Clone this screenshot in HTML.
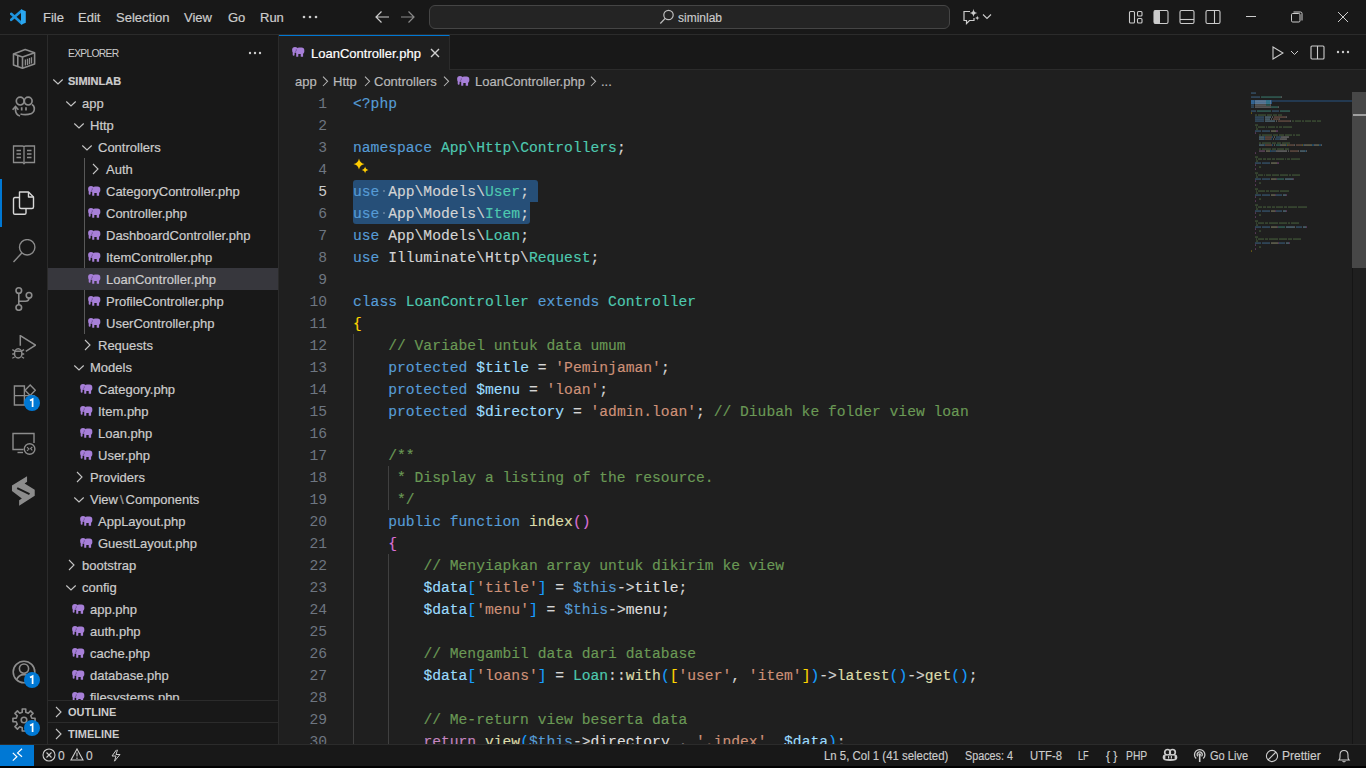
<!DOCTYPE html>
<html><head><meta charset="utf-8">
<style>
*{box-sizing:border-box;margin:0;padding:0}
html,body{width:1366px;height:768px;overflow:hidden;background:#181818;font-family:"Liberation Sans",sans-serif;color:#cccccc}
.abs{position:absolute}
svg{display:block}
#title{position:absolute;left:0;top:0;width:1366px;height:35px;background:#181818;border-bottom:1px solid #2b2b2b}
.menu{position:absolute;top:10px;font-size:13px;color:#cccccc;line-height:16px;-webkit-text-stroke:0.2px #cccccc}
#cc{position:absolute;left:429px;top:5px;width:521px;height:24px;background:#242424;border:1px solid #454545;border-radius:6px}
#act{position:absolute;left:0;top:35px;width:48px;height:709px;background:#181818;border-right:1px solid #2b2b2b}
.ai{position:absolute;left:0;width:47px;height:48px}
.ai svg{position:absolute;left:12px;top:12px}
.badge{position:absolute;width:16px;height:16px;border-radius:8px;background:#0078d4;color:#fff;font-size:10px;font-weight:bold;text-align:center;line-height:16px}
#side{position:absolute;left:48px;top:35px;width:231px;height:709px;background:#181818;border-right:1px solid #2b2b2b;overflow:hidden}
.row{position:absolute;left:0;width:230px;height:22px}
.row.sel{background:#37373d}
.ico{position:absolute}
.ico svg{display:block}
.tl{position:absolute;top:1px;line-height:22px;font-size:13px;color:#cccccc;white-space:nowrap;-webkit-text-stroke:0.2px #cccccc}
.tl.root{font-weight:bold;font-size:11px;top:0}
#tree{position:absolute;left:0;top:35px;width:230px;height:630px;overflow:hidden}
.sech{position:absolute;left:0;width:230px;height:22px;border-top:1px solid #2b2b2b}
.sech .t{position:absolute;left:20px;top:1px;line-height:21px;font-size:11px;font-weight:bold;color:#cccccc}
#editor{position:absolute;left:279px;top:35px;width:1087px;height:709px;background:#1f1f1f}
#tabs{position:absolute;left:0;top:0;width:1087px;height:35px;background:#181818;border-bottom:1px solid #2b2b2b}
#tab{position:absolute;left:0;top:0;width:171px;height:35px;background:#1f1f1f;border-top:1px solid #0078d4;border-right:1px solid #2b2b2b}
#crumbs{position:absolute;left:0;top:36px;width:1087px;height:22px;font-size:13px;color:#b9b9b9;line-height:22px;-webkit-text-stroke:0.2px #b9b9b9}
#code{position:absolute;left:0;top:57px;width:971px;height:652px;overflow:hidden}
.cl{position:absolute;left:74px;height:22px;line-height:22px;font-family:"Liberation Mono",monospace;font-size:14.66px;white-space:pre;color:#d4d4d4;-webkit-text-stroke:0.15px currentColor}
.cl span{-webkit-text-stroke:0.15px currentColor}
.ln{position:absolute;left:0;width:48px;text-align:right;height:22px;line-height:22px;font-family:"Liberation Mono",monospace;font-size:14.66px;color:#6e7681}
.ln.act{color:#cccccc}
.mm{position:absolute;left:972px;top:57px}
#status{position:absolute;left:0;top:744px;width:1366px;height:22px;background:#181818;border-top:1px solid #2b2b2b;font-size:12px;color:#cccccc}
#status .s{position:absolute;top:1px;line-height:21px;white-space:nowrap;transform-origin:0 50%;-webkit-text-stroke:0.15px #cccccc}
#bottomstrip{position:absolute;left:0;top:766px;width:1366px;height:2px;background:#010101}
</style></head><body>

<div id="title">
  <svg class="abs" style="left:10px;top:9px" width="16" height="16" viewBox="0 0 16 16"><path d="M1.2 4.8 L11.6 14.2 M1.2 10.8 L11.6 1.8" stroke="#1e94de" stroke-width="2.6" stroke-linecap="round"/><path d="M11 0.3 L15.8 2.3 L15.8 13.7 L11 15.7 Z" fill="#2aa6ef"/></svg>
  <div class="menu" style="left:43px">File</div>
  <div class="menu" style="left:78px">Edit</div>
  <div class="menu" style="left:116px">Selection</div>
  <div class="menu" style="left:184px">View</div>
  <div class="menu" style="left:228px">Go</div>
  <div class="menu" style="left:260px">Run</div>
  <svg class="abs" style="left:302px;top:15px" width="16" height="4" viewBox="0 0 16 4"><circle cx="2" cy="2" r="1.3" fill="#ccc"/><circle cx="8" cy="2" r="1.3" fill="#ccc"/><circle cx="14" cy="2" r="1.3" fill="#ccc"/></svg>
  <svg class="abs" style="left:374px;top:10px" width="16" height="14" viewBox="0 0 16 14"><path d="M15 7 H2 M7.5 1.5 L2 7 L7.5 12.5" fill="none" stroke="#cccccc" stroke-width="1.2"/></svg>
  <svg class="abs" style="left:400px;top:10px" width="16" height="14" viewBox="0 0 16 14"><path d="M1 7 H14 M8.5 1.5 L14 7 L8.5 12.5" fill="none" stroke="#8a8a8a" stroke-width="1.2"/></svg>
  <div id="cc"></div>
  <svg class="abs" style="left:659px;top:9px" width="16" height="16" viewBox="0 0 16 16"><circle cx="9.5" cy="6" r="4.7" fill="none" stroke="#bdbdbd" stroke-width="1.2"/><path d="M6.2 9.4 L1.3 14.5" stroke="#bdbdbd" stroke-width="1.3"/></svg>
  <div class="abs" style="left:678px;top:10px;font-size:12px;line-height:16px;color:#cccccc;-webkit-text-stroke:0.15px #cccccc">siminlab</div>
  <svg class="abs" style="left:963px;top:8px" width="18" height="17" viewBox="0 0 18 17"><path d="M7 3.5 H1 V12.5 H3.5 V15.5 L6.5 12.5 H11 V10" fill="none" stroke="#cccccc" stroke-width="1.2"/><path d="M10.5 0.8 C10.9 3.5 11.6 4.4 14.4 4.9 C11.6 5.4 10.9 6.3 10.5 9 C10.1 6.3 9.4 5.4 6.6 4.9 C9.4 4.4 10.1 3.5 10.5 0.8 Z" fill="#cccccc"/><path d="M14.3 7.6 C14.5 9.3 15 9.8 16.8 10.1 C15 10.4 14.5 10.9 14.3 12.6 C14.1 10.9 13.6 10.4 11.8 10.1 C13.6 9.8 14.1 9.3 14.3 7.6 Z" fill="#cccccc"/></svg>
  <svg class="abs" style="left:982px;top:13px" width="10" height="7" viewBox="0 0 10 7"><path d="M1 1.5 L5 5.5 L9 1.5" fill="none" stroke="#cccccc" stroke-width="1.1"/></svg>
  <!-- layout icons -->
  <svg class="abs" style="left:1128px;top:10px" width="16" height="14" viewBox="0 0 16 14"><rect x="1.5" y="1.5" width="5" height="11.5" rx="1" fill="none" stroke="#cccccc" stroke-width="1.1"/><rect x="9.5" y="1.5" width="4.5" height="4.5" rx="1" fill="none" stroke="#cccccc" stroke-width="1.1"/><rect x="9.5" y="8.5" width="4.5" height="4.5" rx="1" fill="none" stroke="#cccccc" stroke-width="1.1"/></svg>
  <svg class="abs" style="left:1153px;top:9px" width="16" height="16" viewBox="0 0 16 16"><rect x="1" y="1.5" width="14" height="13" rx="1.5" fill="none" stroke="#cccccc" stroke-width="1.1"/><rect x="1" y="1.5" width="6" height="13" rx="1" fill="#cccccc"/></svg>
  <svg class="abs" style="left:1179px;top:9px" width="16" height="16" viewBox="0 0 16 16"><rect x="1" y="1.5" width="14" height="13" rx="1.5" fill="none" stroke="#cccccc" stroke-width="1.1"/><path d="M1 10.5 H15" stroke="#cccccc" stroke-width="1.1"/></svg>
  <svg class="abs" style="left:1205px;top:9px" width="16" height="16" viewBox="0 0 16 16"><rect x="1" y="1.5" width="14" height="13" rx="1.5" fill="none" stroke="#cccccc" stroke-width="1.1"/><path d="M9.5 1.5 V14.5" stroke="#cccccc" stroke-width="1.1"/></svg>
  <!-- window controls -->
  <div class="abs" style="left:1246px;top:16px;width:10px;height:1px;background:#cccccc"></div>
  <svg class="abs" style="left:1291px;top:11px" width="12" height="12" viewBox="0 0 12 12"><rect x="0.5" y="2.5" width="8.5" height="8.5" rx="1.2" fill="none" stroke="#cccccc" stroke-width="1"/><path d="M2.5 1 H9.5 Q11 1 11 2.5 V9.5" fill="none" stroke="#cccccc" stroke-width="1"/></svg>
  <svg class="abs" style="left:1337px;top:11px" width="12" height="12" viewBox="0 0 12 12"><path d="M1 1 L11 11 M11 1 L1 11" stroke="#cccccc" stroke-width="1"/></svg>
</div>

<div id="act">
<div class="abs" style="left:0;top:0px;width:47px;height:48px"><svg class="abs" style="left:12px;top:12px" width="24" height="24" viewBox="0 0 24 24"><g fill="none" stroke="#8c8c8c" stroke-width="1.6" stroke-linejoin="round"><path d="M1.5 7 L13.2 2.5 L22.6 5.8 L22.6 17.1 L10.5 21.2 L1.5 18.1 Z"/><path d="M1.5 7 L10.5 10.1 L22.6 5.8"/><path d="M10.5 10.1 V21.2"/><path d="M5.8 9 V19.5"/><path d="M13.4 12.5 V18.6 M15.5 11.8 V17.9 M17.5 11 V17.2 M19.5 10.2 V16.5" stroke-width="1.3"/></g></svg></div>
<div class="abs" style="left:0;top:48px;width:47px;height:48px"><svg class="abs" style="left:12px;top:12px" width="24" height="24" viewBox="0 0 24 24"><g fill="none" stroke="#8c8c8c" stroke-width="1.7"><circle cx="8.2" cy="6.1" r="3.9"/><circle cx="16.2" cy="6.1" r="3.9"/><path d="M8.5 19 Q14 20.5 19.5 18.5 Q23 16.5 22.2 12.5 Q21.8 10.5 20 9.5"/><path d="M9.7 12.3 V15.6 M14 12.3 V15.6"/><path d="M3.5 12 V15 Q3.5 19.5 8 21"/><path d="M0.6 14.8 L3.5 11.5 L6.4 14.8"/></g></svg></div>
<div class="abs" style="left:0;top:96px;width:47px;height:48px"><svg class="abs" style="left:12px;top:12px" width="24" height="24" viewBox="0 0 24 24"><g fill="none" stroke="#8c8c8c" stroke-width="1.3"><path d="M1.5 3 H10.5 Q12 3 12 4.5 Q12 3 13.5 3 H22.5 V19.5 H13 L12 20.8 L11 19.5 H1.5 Z"/><path d="M12 4.5 V19.5"/><path d="M4.5 7.5 H9 M4.5 11 H9 M4.5 14.5 H9 M15 7.5 H19.5 M15 11 H19.5 M15 14.5 H19.5"/></g></svg></div>
<div class="abs" style="left:0;top:144px;width:47px;height:48px"><svg class="abs" style="left:12px;top:12px" width="24" height="24" viewBox="0 0 24 24"><g fill="none" stroke="#d7d7d7" stroke-width="1.4" stroke-linejoin="round"><path d="M7.5 1 H16.5 L21.5 6 V16 Q21.5 17.5 20 17.5 H9 Q7.5 17.5 7.5 16 Z"/><path d="M16.5 1 V6 H21.5"/><path d="M7.5 6.5 H3 Q1.5 6.5 1.5 8 V22 Q1.5 23.3 3 23.3 H12.5 Q14 23.3 14 22 V17.5"/></g></svg><div class="abs" style="left:0;top:0;width:2px;height:48px;background:#0078d4"></div></div>
<div class="abs" style="left:0;top:192px;width:47px;height:48px"><svg class="abs" style="left:12px;top:12px" width="24" height="24" viewBox="0 0 24 24"><g fill="none" stroke="#8c8c8c" stroke-width="1.4"><circle cx="15.2" cy="8.3" r="7.7"/><path d="M9.8 14 L1.5 23"/></g></svg></div>
<div class="abs" style="left:0;top:240px;width:47px;height:48px"><svg class="abs" style="left:12px;top:12px" width="24" height="24" viewBox="0 0 24 24"><g fill="none" stroke="#8c8c8c" stroke-width="1.6"><circle cx="6.8" cy="3.6" r="2.8"/><circle cx="17" cy="8.3" r="2.8"/><circle cx="6.8" cy="20.5" r="2.8"/><path d="M6.8 6.4 V17.7"/><path d="M17 11.1 Q17 14.2 13.5 14.2 H6.8"/></g></svg></div>
<div class="abs" style="left:0;top:288px;width:47px;height:48px"><svg class="abs" style="left:12px;top:12px" width="24" height="24" viewBox="0 0 24 24"><g fill="none" stroke="#8c8c8c" stroke-width="1.5"><path d="M8.3 10.7 V0.6 L23.5 10.1 L13.8 16.3"/><ellipse cx="6.2" cy="18.4" rx="3.7" ry="4.6"/><path d="M2.7 16.2 H9.7"/><path d="M0.3 14.6 L2.6 15.9 M12.1 14.6 L9.8 15.9 M0.2 19 H2.5 M9.9 19 H12.2 M0.3 23.3 L2.6 22 M12.1 23.3 L9.8 22" stroke-width="1.3"/></g></svg></div>
<div class="abs" style="left:0;top:336px;width:47px;height:48px"><svg class="abs" style="left:12px;top:12px" width="24" height="24" viewBox="0 0 24 24"><g fill="none" stroke="#8c8c8c" stroke-width="1.4"><path d="M2.4 3 H12.4 V22 H2.4 Z M2.4 12.6 H22 V22 H12.4"/><path d="M18.2 2 L23.3 7.2 L18.2 12.4 L13 7.2 Z"/></g></svg><div class="badge" style="left:24px;top:24px"><svg width="16" height="16" viewBox="0 0 16 16"><path d="M6 5.6 L8.6 4.2 V12" fill="none" stroke="#fff" stroke-width="1.7"/></svg></div></div>
<div class="abs" style="left:0;top:384px;width:47px;height:48px"><svg class="abs" style="left:12px;top:12px" width="24" height="24" viewBox="0 0 24 24"><g fill="none" stroke="#8c8c8c" stroke-width="1.4"><path d="M11.5 18.5 H1 V2.5 H22 V12"/><path d="M5.5 21.5 H11"/><circle cx="17.6" cy="18" r="5.3"/><path d="M15 16.2 L17 18 L15 19.8 M20.3 16 L18.6 17.6 L20.3 19.4" stroke-width="1.1"/></g></svg></div>
<div class="abs" style="left:0;top:432px;width:47px;height:48px"><svg class="abs" style="left:10px;top:7px" width="28" height="34" viewBox="0 0 28 34"><path fill="#8c8c8c" d="M17.06 2.2 L17.06 7.65 L14.58 9.4 L24.73 15.8 L24.73 21.8 L9.14 31.7 L9.14 26.2 L11.86 24.5 L1.96 17.06 L1.96 11.4 Z"/><path d="M7.2 14.1 L19.5 20.1" stroke="#181818" stroke-width="1.9"/></svg></div>
<div class="abs" style="left:0;top:613px;width:47px;height:48px"><svg class="abs" style="left:12px;top:12px" width="24" height="24" viewBox="0 0 24 24"><g fill="none" stroke="#8c8c8c" stroke-width="1.6"><circle cx="12" cy="12" r="10.8"/><circle cx="12" cy="8.6" r="4.6"/><path d="M4.6 19.8 Q6.5 14.6 12 14.6 Q17.5 14.6 19.4 19.8"/></g></svg><div class="badge" style="left:24px;top:24px"><svg width="16" height="16" viewBox="0 0 16 16"><path d="M6 5.6 L8.6 4.2 V12" fill="none" stroke="#fff" stroke-width="1.7"/></svg></div></div>
<div class="abs" style="left:0;top:661px;width:47px;height:48px"><svg class="abs" style="left:12px;top:12px" width="24" height="24" viewBox="0 0 24 24"><g fill="none" stroke="#8c8c8c" stroke-width="1.6" stroke-linejoin="round"><path d="M19.81 10.25 L23.06 10.22 L23.06 13.78 L19.81 13.75 L18.76 16.29 L21.08 18.56 L18.56 21.08 L16.29 18.76 L13.75 19.81 L13.78 23.06 L10.22 23.06 L10.25 19.81 L7.71 18.76 L5.44 21.08 L2.92 18.56 L5.24 16.29 L4.19 13.75 L0.94 13.78 L0.94 10.22 L4.19 10.25 L5.24 7.71 L2.92 5.44 L5.44 2.92 L7.71 5.24 L10.25 4.19 L10.22 0.94 L13.78 0.94 L13.75 4.19 L16.29 5.24 L18.56 2.92 L21.08 5.44 L18.76 7.71 Z"/><circle cx="12" cy="12" r="2.8"/></g></svg><div class="badge" style="left:24px;top:24px"><svg width="16" height="16" viewBox="0 0 16 16"><path d="M6 5.6 L8.6 4.2 V12" fill="none" stroke="#fff" stroke-width="1.7"/></svg></div></div>
</div>

<div id="side">
  <div class="abs" style="left:20px;top:1px;line-height:35px;font-size:10.3px;letter-spacing:-0.7px;color:#cccccc">EXPLORER</div>
  <svg class="abs" style="left:200px;top:16px" width="14" height="4" viewBox="0 0 14 4"><circle cx="2" cy="2" r="1.2" fill="#ccc"/><circle cx="7" cy="2" r="1.2" fill="#ccc"/><circle cx="12" cy="2" r="1.2" fill="#ccc"/></svg>
  <div id="tree">
    <div class="abs" style="left:36px;top:88px;width:1px;height:176px;background:#585858"></div>
<div class="row" style="top:0px"><div class="ico" style="left:4px;top:8px"><svg width="12" height="7" viewBox="0 0 12 7"><path d="M1.3 1.5 L6 6 L10.7 1.5" fill="none" stroke="#c5c5c5" stroke-width="1.15"/></svg></div><div class="tl root" style="left:20px">SIMINLAB</div></div>
<div class="row" style="top:22px"><div class="ico" style="left:17px;top:8px"><svg width="12" height="7" viewBox="0 0 12 7"><path d="M1.3 1.5 L6 6 L10.7 1.5" fill="none" stroke="#c5c5c5" stroke-width="1.15"/></svg></div><div class="tl" style="left:34px">app</div></div>
<div class="row" style="top:44px"><div class="ico" style="left:25px;top:8px"><svg width="12" height="7" viewBox="0 0 12 7"><path d="M1.3 1.5 L6 6 L10.7 1.5" fill="none" stroke="#c5c5c5" stroke-width="1.15"/></svg></div><div class="tl" style="left:42px">Http</div></div>
<div class="row" style="top:66px"><div class="ico" style="left:33px;top:8px"><svg width="12" height="7" viewBox="0 0 12 7"><path d="M1.3 1.5 L6 6 L10.7 1.5" fill="none" stroke="#c5c5c5" stroke-width="1.15"/></svg></div><div class="tl" style="left:50px">Controllers</div></div>
<div class="row" style="top:88px"><div class="ico" style="left:44px;top:5px"><svg width="7" height="12" viewBox="0 0 7 12"><path d="M1 1 L6 6 L1 11" fill="none" stroke="#c5c5c5" stroke-width="1.1"/></svg></div><div class="tl" style="left:58px">Auth</div></div>
<div class="row" style="top:110px"><div class="ico" style="left:40px;top:6px"><svg width="13" height="10" viewBox="0 0 13 10"><g fill="#a77fd8"><circle cx="3" cy="2.9" r="2.9"/><rect x="4.4" y="0.6" width="7.9" height="6.4" rx="2.8"/><rect x="4.2" y="4.5" width="2.1" height="5.2" rx="0.5"/><rect x="8.7" y="4.5" width="2.4" height="5.2" rx="0.5"/><rect x="0.7" y="3.5" width="1.9" height="5.2" rx="0.9"/></g><path d="M3 5.2 Q4.6 4.6 4.3 2.2" fill="none" stroke="#5a3f80" stroke-width="0.6"/></svg></div><div class="tl" style="left:58px">CategoryController.php</div></div>
<div class="row" style="top:132px"><div class="ico" style="left:40px;top:6px"><svg width="13" height="10" viewBox="0 0 13 10"><g fill="#a77fd8"><circle cx="3" cy="2.9" r="2.9"/><rect x="4.4" y="0.6" width="7.9" height="6.4" rx="2.8"/><rect x="4.2" y="4.5" width="2.1" height="5.2" rx="0.5"/><rect x="8.7" y="4.5" width="2.4" height="5.2" rx="0.5"/><rect x="0.7" y="3.5" width="1.9" height="5.2" rx="0.9"/></g><path d="M3 5.2 Q4.6 4.6 4.3 2.2" fill="none" stroke="#5a3f80" stroke-width="0.6"/></svg></div><div class="tl" style="left:58px">Controller.php</div></div>
<div class="row" style="top:154px"><div class="ico" style="left:40px;top:6px"><svg width="13" height="10" viewBox="0 0 13 10"><g fill="#a77fd8"><circle cx="3" cy="2.9" r="2.9"/><rect x="4.4" y="0.6" width="7.9" height="6.4" rx="2.8"/><rect x="4.2" y="4.5" width="2.1" height="5.2" rx="0.5"/><rect x="8.7" y="4.5" width="2.4" height="5.2" rx="0.5"/><rect x="0.7" y="3.5" width="1.9" height="5.2" rx="0.9"/></g><path d="M3 5.2 Q4.6 4.6 4.3 2.2" fill="none" stroke="#5a3f80" stroke-width="0.6"/></svg></div><div class="tl" style="left:58px">DashboardController.php</div></div>
<div class="row" style="top:176px"><div class="ico" style="left:40px;top:6px"><svg width="13" height="10" viewBox="0 0 13 10"><g fill="#a77fd8"><circle cx="3" cy="2.9" r="2.9"/><rect x="4.4" y="0.6" width="7.9" height="6.4" rx="2.8"/><rect x="4.2" y="4.5" width="2.1" height="5.2" rx="0.5"/><rect x="8.7" y="4.5" width="2.4" height="5.2" rx="0.5"/><rect x="0.7" y="3.5" width="1.9" height="5.2" rx="0.9"/></g><path d="M3 5.2 Q4.6 4.6 4.3 2.2" fill="none" stroke="#5a3f80" stroke-width="0.6"/></svg></div><div class="tl" style="left:58px">ItemController.php</div></div>
<div class="row sel" style="top:198px"><div class="ico" style="left:40px;top:6px"><svg width="13" height="10" viewBox="0 0 13 10"><g fill="#a77fd8"><circle cx="3" cy="2.9" r="2.9"/><rect x="4.4" y="0.6" width="7.9" height="6.4" rx="2.8"/><rect x="4.2" y="4.5" width="2.1" height="5.2" rx="0.5"/><rect x="8.7" y="4.5" width="2.4" height="5.2" rx="0.5"/><rect x="0.7" y="3.5" width="1.9" height="5.2" rx="0.9"/></g><path d="M3 5.2 Q4.6 4.6 4.3 2.2" fill="none" stroke="#5a3f80" stroke-width="0.6"/></svg></div><div class="tl" style="left:58px">LoanController.php</div></div>
<div class="row" style="top:220px"><div class="ico" style="left:40px;top:6px"><svg width="13" height="10" viewBox="0 0 13 10"><g fill="#a77fd8"><circle cx="3" cy="2.9" r="2.9"/><rect x="4.4" y="0.6" width="7.9" height="6.4" rx="2.8"/><rect x="4.2" y="4.5" width="2.1" height="5.2" rx="0.5"/><rect x="8.7" y="4.5" width="2.4" height="5.2" rx="0.5"/><rect x="0.7" y="3.5" width="1.9" height="5.2" rx="0.9"/></g><path d="M3 5.2 Q4.6 4.6 4.3 2.2" fill="none" stroke="#5a3f80" stroke-width="0.6"/></svg></div><div class="tl" style="left:58px">ProfileController.php</div></div>
<div class="row" style="top:242px"><div class="ico" style="left:40px;top:6px"><svg width="13" height="10" viewBox="0 0 13 10"><g fill="#a77fd8"><circle cx="3" cy="2.9" r="2.9"/><rect x="4.4" y="0.6" width="7.9" height="6.4" rx="2.8"/><rect x="4.2" y="4.5" width="2.1" height="5.2" rx="0.5"/><rect x="8.7" y="4.5" width="2.4" height="5.2" rx="0.5"/><rect x="0.7" y="3.5" width="1.9" height="5.2" rx="0.9"/></g><path d="M3 5.2 Q4.6 4.6 4.3 2.2" fill="none" stroke="#5a3f80" stroke-width="0.6"/></svg></div><div class="tl" style="left:58px">UserController.php</div></div>
<div class="row" style="top:264px"><div class="ico" style="left:36px;top:5px"><svg width="7" height="12" viewBox="0 0 7 12"><path d="M1 1 L6 6 L1 11" fill="none" stroke="#c5c5c5" stroke-width="1.1"/></svg></div><div class="tl" style="left:50px">Requests</div></div>
<div class="row" style="top:286px"><div class="ico" style="left:25px;top:8px"><svg width="12" height="7" viewBox="0 0 12 7"><path d="M1.3 1.5 L6 6 L10.7 1.5" fill="none" stroke="#c5c5c5" stroke-width="1.15"/></svg></div><div class="tl" style="left:42px">Models</div></div>
<div class="row" style="top:308px"><div class="ico" style="left:32px;top:6px"><svg width="13" height="10" viewBox="0 0 13 10"><g fill="#a77fd8"><circle cx="3" cy="2.9" r="2.9"/><rect x="4.4" y="0.6" width="7.9" height="6.4" rx="2.8"/><rect x="4.2" y="4.5" width="2.1" height="5.2" rx="0.5"/><rect x="8.7" y="4.5" width="2.4" height="5.2" rx="0.5"/><rect x="0.7" y="3.5" width="1.9" height="5.2" rx="0.9"/></g><path d="M3 5.2 Q4.6 4.6 4.3 2.2" fill="none" stroke="#5a3f80" stroke-width="0.6"/></svg></div><div class="tl" style="left:50px">Category.php</div></div>
<div class="row" style="top:330px"><div class="ico" style="left:32px;top:6px"><svg width="13" height="10" viewBox="0 0 13 10"><g fill="#a77fd8"><circle cx="3" cy="2.9" r="2.9"/><rect x="4.4" y="0.6" width="7.9" height="6.4" rx="2.8"/><rect x="4.2" y="4.5" width="2.1" height="5.2" rx="0.5"/><rect x="8.7" y="4.5" width="2.4" height="5.2" rx="0.5"/><rect x="0.7" y="3.5" width="1.9" height="5.2" rx="0.9"/></g><path d="M3 5.2 Q4.6 4.6 4.3 2.2" fill="none" stroke="#5a3f80" stroke-width="0.6"/></svg></div><div class="tl" style="left:50px">Item.php</div></div>
<div class="row" style="top:352px"><div class="ico" style="left:32px;top:6px"><svg width="13" height="10" viewBox="0 0 13 10"><g fill="#a77fd8"><circle cx="3" cy="2.9" r="2.9"/><rect x="4.4" y="0.6" width="7.9" height="6.4" rx="2.8"/><rect x="4.2" y="4.5" width="2.1" height="5.2" rx="0.5"/><rect x="8.7" y="4.5" width="2.4" height="5.2" rx="0.5"/><rect x="0.7" y="3.5" width="1.9" height="5.2" rx="0.9"/></g><path d="M3 5.2 Q4.6 4.6 4.3 2.2" fill="none" stroke="#5a3f80" stroke-width="0.6"/></svg></div><div class="tl" style="left:50px">Loan.php</div></div>
<div class="row" style="top:374px"><div class="ico" style="left:32px;top:6px"><svg width="13" height="10" viewBox="0 0 13 10"><g fill="#a77fd8"><circle cx="3" cy="2.9" r="2.9"/><rect x="4.4" y="0.6" width="7.9" height="6.4" rx="2.8"/><rect x="4.2" y="4.5" width="2.1" height="5.2" rx="0.5"/><rect x="8.7" y="4.5" width="2.4" height="5.2" rx="0.5"/><rect x="0.7" y="3.5" width="1.9" height="5.2" rx="0.9"/></g><path d="M3 5.2 Q4.6 4.6 4.3 2.2" fill="none" stroke="#5a3f80" stroke-width="0.6"/></svg></div><div class="tl" style="left:50px">User.php</div></div>
<div class="row" style="top:396px"><div class="ico" style="left:28px;top:5px"><svg width="7" height="12" viewBox="0 0 7 12"><path d="M1 1 L6 6 L1 11" fill="none" stroke="#c5c5c5" stroke-width="1.1"/></svg></div><div class="tl" style="left:42px">Providers</div></div>
<div class="row" style="top:418px"><div class="ico" style="left:25px;top:8px"><svg width="12" height="7" viewBox="0 0 12 7"><path d="M1.3 1.5 L6 6 L10.7 1.5" fill="none" stroke="#c5c5c5" stroke-width="1.15"/></svg></div><div class="tl" style="left:42px">View<span style="color:#8b8b8b;margin:0 2px">\</span>Components</div></div>
<div class="row" style="top:440px"><div class="ico" style="left:32px;top:6px"><svg width="13" height="10" viewBox="0 0 13 10"><g fill="#a77fd8"><circle cx="3" cy="2.9" r="2.9"/><rect x="4.4" y="0.6" width="7.9" height="6.4" rx="2.8"/><rect x="4.2" y="4.5" width="2.1" height="5.2" rx="0.5"/><rect x="8.7" y="4.5" width="2.4" height="5.2" rx="0.5"/><rect x="0.7" y="3.5" width="1.9" height="5.2" rx="0.9"/></g><path d="M3 5.2 Q4.6 4.6 4.3 2.2" fill="none" stroke="#5a3f80" stroke-width="0.6"/></svg></div><div class="tl" style="left:50px">AppLayout.php</div></div>
<div class="row" style="top:462px"><div class="ico" style="left:32px;top:6px"><svg width="13" height="10" viewBox="0 0 13 10"><g fill="#a77fd8"><circle cx="3" cy="2.9" r="2.9"/><rect x="4.4" y="0.6" width="7.9" height="6.4" rx="2.8"/><rect x="4.2" y="4.5" width="2.1" height="5.2" rx="0.5"/><rect x="8.7" y="4.5" width="2.4" height="5.2" rx="0.5"/><rect x="0.7" y="3.5" width="1.9" height="5.2" rx="0.9"/></g><path d="M3 5.2 Q4.6 4.6 4.3 2.2" fill="none" stroke="#5a3f80" stroke-width="0.6"/></svg></div><div class="tl" style="left:50px">GuestLayout.php</div></div>
<div class="row" style="top:484px"><div class="ico" style="left:20px;top:5px"><svg width="7" height="12" viewBox="0 0 7 12"><path d="M1 1 L6 6 L1 11" fill="none" stroke="#c5c5c5" stroke-width="1.1"/></svg></div><div class="tl" style="left:34px">bootstrap</div></div>
<div class="row" style="top:506px"><div class="ico" style="left:17px;top:8px"><svg width="12" height="7" viewBox="0 0 12 7"><path d="M1.3 1.5 L6 6 L10.7 1.5" fill="none" stroke="#c5c5c5" stroke-width="1.15"/></svg></div><div class="tl" style="left:34px">config</div></div>
<div class="row" style="top:528px"><div class="ico" style="left:24px;top:6px"><svg width="13" height="10" viewBox="0 0 13 10"><g fill="#a77fd8"><circle cx="3" cy="2.9" r="2.9"/><rect x="4.4" y="0.6" width="7.9" height="6.4" rx="2.8"/><rect x="4.2" y="4.5" width="2.1" height="5.2" rx="0.5"/><rect x="8.7" y="4.5" width="2.4" height="5.2" rx="0.5"/><rect x="0.7" y="3.5" width="1.9" height="5.2" rx="0.9"/></g><path d="M3 5.2 Q4.6 4.6 4.3 2.2" fill="none" stroke="#5a3f80" stroke-width="0.6"/></svg></div><div class="tl" style="left:42px">app.php</div></div>
<div class="row" style="top:550px"><div class="ico" style="left:24px;top:6px"><svg width="13" height="10" viewBox="0 0 13 10"><g fill="#a77fd8"><circle cx="3" cy="2.9" r="2.9"/><rect x="4.4" y="0.6" width="7.9" height="6.4" rx="2.8"/><rect x="4.2" y="4.5" width="2.1" height="5.2" rx="0.5"/><rect x="8.7" y="4.5" width="2.4" height="5.2" rx="0.5"/><rect x="0.7" y="3.5" width="1.9" height="5.2" rx="0.9"/></g><path d="M3 5.2 Q4.6 4.6 4.3 2.2" fill="none" stroke="#5a3f80" stroke-width="0.6"/></svg></div><div class="tl" style="left:42px">auth.php</div></div>
<div class="row" style="top:572px"><div class="ico" style="left:24px;top:6px"><svg width="13" height="10" viewBox="0 0 13 10"><g fill="#a77fd8"><circle cx="3" cy="2.9" r="2.9"/><rect x="4.4" y="0.6" width="7.9" height="6.4" rx="2.8"/><rect x="4.2" y="4.5" width="2.1" height="5.2" rx="0.5"/><rect x="8.7" y="4.5" width="2.4" height="5.2" rx="0.5"/><rect x="0.7" y="3.5" width="1.9" height="5.2" rx="0.9"/></g><path d="M3 5.2 Q4.6 4.6 4.3 2.2" fill="none" stroke="#5a3f80" stroke-width="0.6"/></svg></div><div class="tl" style="left:42px">cache.php</div></div>
<div class="row" style="top:594px"><div class="ico" style="left:24px;top:6px"><svg width="13" height="10" viewBox="0 0 13 10"><g fill="#a77fd8"><circle cx="3" cy="2.9" r="2.9"/><rect x="4.4" y="0.6" width="7.9" height="6.4" rx="2.8"/><rect x="4.2" y="4.5" width="2.1" height="5.2" rx="0.5"/><rect x="8.7" y="4.5" width="2.4" height="5.2" rx="0.5"/><rect x="0.7" y="3.5" width="1.9" height="5.2" rx="0.9"/></g><path d="M3 5.2 Q4.6 4.6 4.3 2.2" fill="none" stroke="#5a3f80" stroke-width="0.6"/></svg></div><div class="tl" style="left:42px">database.php</div></div>
<div class="row" style="top:616px"><div class="ico" style="left:24px;top:6px"><svg width="13" height="10" viewBox="0 0 13 10"><g fill="#a77fd8"><circle cx="3" cy="2.9" r="2.9"/><rect x="4.4" y="0.6" width="7.9" height="6.4" rx="2.8"/><rect x="4.2" y="4.5" width="2.1" height="5.2" rx="0.5"/><rect x="8.7" y="4.5" width="2.4" height="5.2" rx="0.5"/><rect x="0.7" y="3.5" width="1.9" height="5.2" rx="0.9"/></g><path d="M3 5.2 Q4.6 4.6 4.3 2.2" fill="none" stroke="#5a3f80" stroke-width="0.6"/></svg></div><div class="tl" style="left:42px">filesystems.php</div></div>
  </div>
  <div class="sech" style="top:665px"><svg class="abs" style="left:7px;top:5px" width="7" height="12" viewBox="0 0 7 12"><path d="M1 1 L6 6 L1 11" fill="none" stroke="#c5c5c5" stroke-width="1.1"/></svg><div class="t">OUTLINE</div></div>
  <div class="sech" style="top:687px"><svg class="abs" style="left:7px;top:5px" width="7" height="12" viewBox="0 0 7 12"><path d="M1 1 L6 6 L1 11" fill="none" stroke="#c5c5c5" stroke-width="1.1"/></svg><div class="t">TIMELINE</div></div>
</div>

<div id="editor">
  <div id="tabs">
    <div id="tab">
      <div class="abs" style="left:13px;top:11px"><svg width="13" height="10" viewBox="0 0 13 10"><g fill="#a77fd8"><circle cx="3" cy="2.9" r="2.9"/><rect x="4.4" y="0.6" width="7.9" height="6.4" rx="2.8"/><rect x="4.2" y="4.5" width="2.1" height="5.2" rx="0.5"/><rect x="8.7" y="4.5" width="2.4" height="5.2" rx="0.5"/><rect x="0.7" y="3.5" width="1.9" height="5.2" rx="0.9"/></g><path d="M3 5.2 Q4.6 4.6 4.3 2.2" fill="none" stroke="#5a3f80" stroke-width="0.6"/></svg></div>
      <div class="abs" style="left:32px;top:0;line-height:35px;font-size:13px;color:#ffffff;-webkit-text-stroke:0.2px #ffffff">LoanController.php</div>
      <svg class="abs" style="left:151px;top:12px" width="10" height="10" viewBox="0 0 10 10"><path d="M1 1 L9 9 M9 1 L1 9" stroke="#d0d0d0" stroke-width="1.4"/></svg>
    </div>
    <svg class="abs" style="left:993px;top:11px" width="12" height="14" viewBox="0 0 12 14"><path d="M1 1 L11 7 L1 13 Z" fill="none" stroke="#cccccc" stroke-width="1.1"/></svg>
    <svg class="abs" style="left:1011px;top:15px" width="9" height="6" viewBox="0 0 9 6"><path d="M1 1 L4.5 4.5 L8 1" fill="none" stroke="#cccccc" stroke-width="1"/></svg>
    <svg class="abs" style="left:1031px;top:10px" width="15" height="15" viewBox="0 0 15 15"><rect x="1" y="1" width="13" height="13" rx="1" fill="none" stroke="#cccccc" stroke-width="1.1"/><path d="M7.5 1 V14" stroke="#cccccc" stroke-width="1.1"/></svg>
    <svg class="abs" style="left:1057px;top:15px" width="14" height="4" viewBox="0 0 14 4"><circle cx="2" cy="2" r="1.2" fill="#ccc"/><circle cx="7" cy="2" r="1.2" fill="#ccc"/><circle cx="12" cy="2" r="1.2" fill="#ccc"/></svg>
  </div>
  <div id="crumbs"><div class="abs" style="left:16px;top:0">app</div>
<svg class="abs" style="left:43px;top:5px" width="7" height="11" viewBox="0 0 7 11"><path d="M1 0.6 L5.6 5.3 L1 10" fill="none" stroke="#b5b5b5" stroke-width="1.05"/></svg>
<div class="abs" style="left:54px;top:0">Http</div>
<svg class="abs" style="left:85px;top:5px" width="7" height="11" viewBox="0 0 7 11"><path d="M1 0.6 L5.6 5.3 L1 10" fill="none" stroke="#b5b5b5" stroke-width="1.05"/></svg>
<div class="abs" style="left:95px;top:0">Controllers</div>
<svg class="abs" style="left:164px;top:5px" width="7" height="11" viewBox="0 0 7 11"><path d="M1 0.6 L5.6 5.3 L1 10" fill="none" stroke="#b5b5b5" stroke-width="1.05"/></svg>
<div class="abs" style="left:177.5px;top:5px"><svg width="13" height="10" viewBox="0 0 13 10"><g fill="#a77fd8"><circle cx="3" cy="2.9" r="2.9"/><rect x="4.4" y="0.6" width="7.9" height="6.4" rx="2.8"/><rect x="4.2" y="4.5" width="2.1" height="5.2" rx="0.5"/><rect x="8.7" y="4.5" width="2.4" height="5.2" rx="0.5"/><rect x="0.7" y="3.5" width="1.9" height="5.2" rx="0.9"/></g><path d="M3 5.2 Q4.6 4.6 4.3 2.2" fill="none" stroke="#5a3f80" stroke-width="0.6"/></svg></div>
<div class="abs" style="left:196px;top:0">LoanController.php</div>
<svg class="abs" style="left:311px;top:5px" width="7" height="11" viewBox="0 0 7 11"><path d="M1 0.6 L5.6 5.3 L1 10" fill="none" stroke="#b5b5b5" stroke-width="1.05"/></svg>
<div class="abs" style="left:322px;top:0">...</div></div>
  <div id="code">
    <!-- selection -->
    <div class="abs" style="left:74px;top:88px;width:185px;height:22px;background:#264f78;border-radius:3px 3px 0 0"></div>
    <div class="abs" style="left:74px;top:110px;width:177px;height:22px;background:#264f78;border-radius:0 0 3px 3px"></div>
    <!-- indent guides -->
    <div class="abs" style="left:74px;top:242px;width:1px;height:440px;background:#404040"></div>
    <div class="abs" style="left:109px;top:462px;width:1px;height:200px;background:#404040"></div>
    <div class="abs" style="left:109px;top:374px;width:1px;height:44px;background:#404040"></div>
    <svg class="abs" style="left:74px;top:66px" width="16" height="16" viewBox="0 0 16 16"><path fill="#ffcc00" d="M6 0.4 C6.7 3.6 8.4 5.3 11.6 6 C8.4 6.7 6.7 8.4 6 11.6 C5.3 8.4 3.6 6.7 0.4 6 C3.6 5.3 5.3 3.6 6 0.4 Z"/><path fill="#ffcc00" d="M12.1 8.6 C12.5 10.6 13.4 11.6 15.5 12 C13.4 12.4 12.5 13.4 12.1 15.4 C11.7 13.4 10.8 12.4 8.7 12 C10.8 11.6 11.7 10.6 12.1 8.6 Z"/></svg>
    <div class="abs" style="left:104px;top:98px;width:2px;height:2px;background:#5a7896"></div>
    <div class="abs" style="left:104px;top:120px;width:2px;height:2px;background:#5a7896"></div>
<div class="ln" style="top:1px">1</div>
<div class="ln" style="top:23px">2</div>
<div class="ln" style="top:45px">3</div>
<div class="ln" style="top:67px">4</div>
<div class="ln act" style="top:89px">5</div>
<div class="ln" style="top:111px">6</div>
<div class="ln" style="top:133px">7</div>
<div class="ln" style="top:155px">8</div>
<div class="ln" style="top:177px">9</div>
<div class="ln" style="top:199px">10</div>
<div class="ln" style="top:221px">11</div>
<div class="ln" style="top:243px">12</div>
<div class="ln" style="top:265px">13</div>
<div class="ln" style="top:287px">14</div>
<div class="ln" style="top:309px">15</div>
<div class="ln" style="top:331px">16</div>
<div class="ln" style="top:353px">17</div>
<div class="ln" style="top:375px">18</div>
<div class="ln" style="top:397px">19</div>
<div class="ln" style="top:419px">20</div>
<div class="ln" style="top:441px">21</div>
<div class="ln" style="top:463px">22</div>
<div class="ln" style="top:485px">23</div>
<div class="ln" style="top:507px">24</div>
<div class="ln" style="top:529px">25</div>
<div class="ln" style="top:551px">26</div>
<div class="ln" style="top:573px">27</div>
<div class="ln" style="top:595px">28</div>
<div class="ln" style="top:617px">29</div>
<div class="ln" style="top:639px">30</div>
<div class="ln" style="top:661px">31</div>
<div class="cl" style="top:1px"><span style="color:#569cd6">&lt;?php</span></div>
<div class="cl" style="top:23px"></div>
<div class="cl" style="top:45px"><span style="color:#569cd6">namespace</span> <span style="color:#4ec9b0">App\Http\Controllers</span><span style="color:#d4d4d4">;</span></div>
<div class="cl" style="top:67px"></div>
<div class="cl" style="top:89px"><span style="color:#569cd6">use</span> <span style="color:#d4d4d4">App\Models\</span><span style="color:#4ec9b0">User</span><span style="color:#d4d4d4">;</span></div>
<div class="cl" style="top:111px"><span style="color:#569cd6">use</span> <span style="color:#d4d4d4">App\Models\</span><span style="color:#4ec9b0">Item</span><span style="color:#d4d4d4">;</span></div>
<div class="cl" style="top:133px"><span style="color:#569cd6">use</span> <span style="color:#d4d4d4">App\Models\</span><span style="color:#4ec9b0">Loan</span><span style="color:#d4d4d4">;</span></div>
<div class="cl" style="top:155px"><span style="color:#569cd6">use</span> <span style="color:#d4d4d4">Illuminate\Http\</span><span style="color:#4ec9b0">Request</span><span style="color:#d4d4d4">;</span></div>
<div class="cl" style="top:177px"></div>
<div class="cl" style="top:199px"><span style="color:#569cd6">class</span> <span style="color:#4ec9b0">LoanController</span> <span style="color:#569cd6">extends</span> <span style="color:#4ec9b0">Controller</span></div>
<div class="cl" style="top:221px"><span style="color:#ffd700">{</span></div>
<div class="cl" style="top:243px">    <span style="color:#6a9955">// Variabel untuk data umum</span></div>
<div class="cl" style="top:265px">    <span style="color:#569cd6">protected</span> <span style="color:#9cdcfe">$title</span><span style="color:#d4d4d4"> = </span><span style="color:#ce9178">'Peminjaman'</span><span style="color:#d4d4d4">;</span></div>
<div class="cl" style="top:287px">    <span style="color:#569cd6">protected</span> <span style="color:#9cdcfe">$menu</span><span style="color:#d4d4d4"> = </span><span style="color:#ce9178">'loan'</span><span style="color:#d4d4d4">;</span></div>
<div class="cl" style="top:309px">    <span style="color:#569cd6">protected</span> <span style="color:#9cdcfe">$directory</span><span style="color:#d4d4d4"> = </span><span style="color:#ce9178">'admin.loan'</span><span style="color:#d4d4d4">; </span><span style="color:#6a9955">// Diubah ke folder view loan</span></div>
<div class="cl" style="top:331px"></div>
<div class="cl" style="top:353px">    <span style="color:#6a9955">/**</span></div>
<div class="cl" style="top:375px">    <span style="color:#6a9955"> * Display a listing of the resource.</span></div>
<div class="cl" style="top:397px">    <span style="color:#6a9955"> */</span></div>
<div class="cl" style="top:419px">    <span style="color:#569cd6">public</span> <span style="color:#569cd6">function</span> <span style="color:#dcdcaa">index</span><span style="color:#da70d6">()</span></div>
<div class="cl" style="top:441px">    <span style="color:#da70d6">{</span></div>
<div class="cl" style="top:463px">        <span style="color:#6a9955">// Menyiapkan array untuk dikirim ke view</span></div>
<div class="cl" style="top:485px">        <span style="color:#9cdcfe">$data</span><span style="color:#179fff">[</span><span style="color:#ce9178">'title'</span><span style="color:#179fff">]</span><span style="color:#d4d4d4"> = </span><span style="color:#569cd6">$this</span><span style="color:#d4d4d4">-&gt;</span><span style="color:#dedede">title</span><span style="color:#d4d4d4">;</span></div>
<div class="cl" style="top:507px">        <span style="color:#9cdcfe">$data</span><span style="color:#179fff">[</span><span style="color:#ce9178">'menu'</span><span style="color:#179fff">]</span><span style="color:#d4d4d4"> = </span><span style="color:#569cd6">$this</span><span style="color:#d4d4d4">-&gt;</span><span style="color:#dedede">menu</span><span style="color:#d4d4d4">;</span></div>
<div class="cl" style="top:529px"></div>
<div class="cl" style="top:551px">        <span style="color:#6a9955">// Mengambil data dari database</span></div>
<div class="cl" style="top:573px">        <span style="color:#9cdcfe">$data</span><span style="color:#179fff">[</span><span style="color:#ce9178">'loans'</span><span style="color:#179fff">]</span><span style="color:#d4d4d4"> = </span><span style="color:#4ec9b0">Loan</span><span style="color:#d4d4d4">::</span><span style="color:#dcdcaa">with</span><span style="color:#179fff">(</span><span style="color:#ffd700">[</span><span style="color:#ce9178">'user'</span><span style="color:#d4d4d4">, </span><span style="color:#ce9178">'item'</span><span style="color:#ffd700">]</span><span style="color:#179fff">)</span><span style="color:#d4d4d4">-&gt;</span><span style="color:#dcdcaa">latest</span><span style="color:#179fff">()</span><span style="color:#d4d4d4">-&gt;</span><span style="color:#dcdcaa">get</span><span style="color:#179fff">()</span><span style="color:#d4d4d4">;</span></div>
<div class="cl" style="top:595px"></div>
<div class="cl" style="top:617px">        <span style="color:#6a9955">// Me-return view beserta data</span></div>
<div class="cl" style="top:639px">        <span style="color:#c586c0">return</span> <span style="color:#dcdcaa">view</span><span style="color:#179fff">(</span><span style="color:#569cd6">$this</span><span style="color:#d4d4d4">-&gt;</span><span style="color:#dedede">directory</span><span style="color:#d4d4d4"> . </span><span style="color:#ce9178">'.index'</span><span style="color:#d4d4d4">, </span><span style="color:#9cdcfe">$data</span><span style="color:#179fff">)</span><span style="color:#d4d4d4">;</span></div>
<div class="cl" style="top:661px">    <span style="color:#da70d6">}</span></div>
  </div>
  <svg class="mm" width="102" height="160" viewBox="0 0 102 160"><rect x="0" y="8" width="102" height="2" fill="#264f78" opacity="0.55"/><rect x="0" y="8" width="21" height="4" fill="#264f78"/><g opacity="0.5"><rect x="0" y="0.5" width="5" height="1.1" fill="#569cd6"/><rect x="0" y="4.5" width="9" height="1.1" fill="#569cd6"/><rect x="10" y="4.5" width="20" height="1.1" fill="#4ec9b0"/><rect x="30" y="4.5" width="1" height="1.1" fill="#d4d4d4"/><rect x="0" y="8.5" width="3" height="1.1" fill="#569cd6"/><rect x="4" y="8.5" width="11" height="1.1" fill="#d4d4d4"/><rect x="15" y="8.5" width="4" height="1.1" fill="#4ec9b0"/><rect x="19" y="8.5" width="1" height="1.1" fill="#d4d4d4"/><rect x="0" y="10.5" width="3" height="1.1" fill="#569cd6"/><rect x="4" y="10.5" width="11" height="1.1" fill="#d4d4d4"/><rect x="15" y="10.5" width="4" height="1.1" fill="#4ec9b0"/><rect x="19" y="10.5" width="1" height="1.1" fill="#d4d4d4"/><rect x="0" y="12.5" width="3" height="1.1" fill="#569cd6"/><rect x="4" y="12.5" width="11" height="1.1" fill="#d4d4d4"/><rect x="15" y="12.5" width="4" height="1.1" fill="#4ec9b0"/><rect x="19" y="12.5" width="1" height="1.1" fill="#d4d4d4"/><rect x="0" y="14.5" width="3" height="1.1" fill="#569cd6"/><rect x="4" y="14.5" width="16" height="1.1" fill="#d4d4d4"/><rect x="20" y="14.5" width="7" height="1.1" fill="#4ec9b0"/><rect x="27" y="14.5" width="1" height="1.1" fill="#d4d4d4"/><rect x="0" y="18.5" width="5" height="1.1" fill="#569cd6"/><rect x="6" y="18.5" width="14" height="1.1" fill="#4ec9b0"/><rect x="21" y="18.5" width="7" height="1.1" fill="#569cd6"/><rect x="29" y="18.5" width="10" height="1.1" fill="#4ec9b0"/><rect x="0" y="20.5" width="1" height="1.1" fill="#ffd700"/><rect x="4" y="22.5" width="2" height="1.1" fill="#6a9955"/><rect x="7" y="22.5" width="8" height="1.1" fill="#6a9955"/><rect x="16" y="22.5" width="5" height="1.1" fill="#6a9955"/><rect x="22" y="22.5" width="4" height="1.1" fill="#6a9955"/><rect x="27" y="22.5" width="4" height="1.1" fill="#6a9955"/><rect x="4" y="24.5" width="9" height="1.1" fill="#569cd6"/><rect x="14" y="24.5" width="6" height="1.1" fill="#9cdcfe"/><rect x="21" y="24.5" width="1" height="1.1" fill="#d4d4d4"/><rect x="23" y="24.5" width="12" height="1.1" fill="#ce9178"/><rect x="35" y="24.5" width="1" height="1.1" fill="#d4d4d4"/><rect x="4" y="26.5" width="9" height="1.1" fill="#569cd6"/><rect x="14" y="26.5" width="5" height="1.1" fill="#9cdcfe"/><rect x="20" y="26.5" width="1" height="1.1" fill="#d4d4d4"/><rect x="22" y="26.5" width="6" height="1.1" fill="#ce9178"/><rect x="28" y="26.5" width="1" height="1.1" fill="#d4d4d4"/><rect x="4" y="28.5" width="9" height="1.1" fill="#569cd6"/><rect x="14" y="28.5" width="10" height="1.1" fill="#9cdcfe"/><rect x="25" y="28.5" width="1" height="1.1" fill="#d4d4d4"/><rect x="27" y="28.5" width="12" height="1.1" fill="#ce9178"/><rect x="39" y="28.5" width="1" height="1.1" fill="#d4d4d4"/><rect x="41" y="28.5" width="2" height="1.1" fill="#6a9955"/><rect x="44" y="28.5" width="6" height="1.1" fill="#6a9955"/><rect x="51" y="28.5" width="2" height="1.1" fill="#6a9955"/><rect x="54" y="28.5" width="6" height="1.1" fill="#6a9955"/><rect x="61" y="28.5" width="4" height="1.1" fill="#6a9955"/><rect x="66" y="28.5" width="4" height="1.1" fill="#6a9955"/><rect x="4" y="32.5" width="3" height="1.1" fill="#6a9955"/><rect x="5" y="34.5" width="1" height="1.1" fill="#6a9955"/><rect x="7" y="34.5" width="7" height="1.1" fill="#6a9955"/><rect x="15" y="34.5" width="1" height="1.1" fill="#6a9955"/><rect x="17" y="34.5" width="7" height="1.1" fill="#6a9955"/><rect x="25" y="34.5" width="2" height="1.1" fill="#6a9955"/><rect x="28" y="34.5" width="3" height="1.1" fill="#6a9955"/><rect x="32" y="34.5" width="9" height="1.1" fill="#6a9955"/><rect x="5" y="36.5" width="2" height="1.1" fill="#6a9955"/><rect x="4" y="38.5" width="6" height="1.1" fill="#569cd6"/><rect x="11" y="38.5" width="8" height="1.1" fill="#569cd6"/><rect x="20" y="38.5" width="5" height="1.1" fill="#dcdcaa"/><rect x="25" y="38.5" width="2" height="1.1" fill="#da70d6"/><rect x="4" y="40.5" width="1" height="1.1" fill="#da70d6"/><rect x="8" y="42.5" width="2" height="1.1" fill="#6a9955"/><rect x="11" y="42.5" width="10" height="1.1" fill="#6a9955"/><rect x="22" y="42.5" width="5" height="1.1" fill="#6a9955"/><rect x="28" y="42.5" width="5" height="1.1" fill="#6a9955"/><rect x="34" y="42.5" width="7" height="1.1" fill="#6a9955"/><rect x="42" y="42.5" width="2" height="1.1" fill="#6a9955"/><rect x="45" y="42.5" width="4" height="1.1" fill="#6a9955"/><rect x="8" y="44.5" width="5" height="1.1" fill="#9cdcfe"/><rect x="13" y="44.5" width="1" height="1.1" fill="#179fff"/><rect x="14" y="44.5" width="7" height="1.1" fill="#ce9178"/><rect x="21" y="44.5" width="1" height="1.1" fill="#179fff"/><rect x="23" y="44.5" width="1" height="1.1" fill="#d4d4d4"/><rect x="25" y="44.5" width="5" height="1.1" fill="#569cd6"/><rect x="30" y="44.5" width="2" height="1.1" fill="#d4d4d4"/><rect x="32" y="44.5" width="5" height="1.1" fill="#dedede"/><rect x="37" y="44.5" width="1" height="1.1" fill="#d4d4d4"/><rect x="8" y="46.5" width="5" height="1.1" fill="#9cdcfe"/><rect x="13" y="46.5" width="1" height="1.1" fill="#179fff"/><rect x="14" y="46.5" width="6" height="1.1" fill="#ce9178"/><rect x="20" y="46.5" width="1" height="1.1" fill="#179fff"/><rect x="22" y="46.5" width="1" height="1.1" fill="#d4d4d4"/><rect x="24" y="46.5" width="5" height="1.1" fill="#569cd6"/><rect x="29" y="46.5" width="2" height="1.1" fill="#d4d4d4"/><rect x="31" y="46.5" width="4" height="1.1" fill="#dedede"/><rect x="35" y="46.5" width="1" height="1.1" fill="#d4d4d4"/><rect x="8" y="50.5" width="2" height="1.1" fill="#6a9955"/><rect x="11" y="50.5" width="9" height="1.1" fill="#6a9955"/><rect x="21" y="50.5" width="4" height="1.1" fill="#6a9955"/><rect x="26" y="50.5" width="4" height="1.1" fill="#6a9955"/><rect x="31" y="50.5" width="8" height="1.1" fill="#6a9955"/><rect x="8" y="52.5" width="5" height="1.1" fill="#9cdcfe"/><rect x="13" y="52.5" width="1" height="1.1" fill="#179fff"/><rect x="14" y="52.5" width="7" height="1.1" fill="#ce9178"/><rect x="21" y="52.5" width="1" height="1.1" fill="#179fff"/><rect x="23" y="52.5" width="1" height="1.1" fill="#d4d4d4"/><rect x="25" y="52.5" width="4" height="1.1" fill="#4ec9b0"/><rect x="29" y="52.5" width="2" height="1.1" fill="#d4d4d4"/><rect x="31" y="52.5" width="4" height="1.1" fill="#dcdcaa"/><rect x="35" y="52.5" width="1" height="1.1" fill="#179fff"/><rect x="36" y="52.5" width="1" height="1.1" fill="#ffd700"/><rect x="37" y="52.5" width="6" height="1.1" fill="#ce9178"/><rect x="43" y="52.5" width="1" height="1.1" fill="#d4d4d4"/><rect x="45" y="52.5" width="6" height="1.1" fill="#ce9178"/><rect x="51" y="52.5" width="1" height="1.1" fill="#ffd700"/><rect x="52" y="52.5" width="1" height="1.1" fill="#179fff"/><rect x="53" y="52.5" width="2" height="1.1" fill="#d4d4d4"/><rect x="55" y="52.5" width="6" height="1.1" fill="#dcdcaa"/><rect x="61" y="52.5" width="2" height="1.1" fill="#179fff"/><rect x="63" y="52.5" width="2" height="1.1" fill="#d4d4d4"/><rect x="65" y="52.5" width="3" height="1.1" fill="#dcdcaa"/><rect x="68" y="52.5" width="2" height="1.1" fill="#179fff"/><rect x="70" y="52.5" width="1" height="1.1" fill="#d4d4d4"/><rect x="8" y="56.5" width="2" height="1.1" fill="#6a9955"/><rect x="11" y="56.5" width="9" height="1.1" fill="#6a9955"/><rect x="21" y="56.5" width="4" height="1.1" fill="#6a9955"/><rect x="26" y="56.5" width="7" height="1.1" fill="#6a9955"/><rect x="34" y="56.5" width="4" height="1.1" fill="#6a9955"/><rect x="8" y="58.5" width="6" height="1.1" fill="#c586c0"/><rect x="15" y="58.5" width="4" height="1.1" fill="#dcdcaa"/><rect x="19" y="58.5" width="1" height="1.1" fill="#179fff"/><rect x="20" y="58.5" width="5" height="1.1" fill="#569cd6"/><rect x="25" y="58.5" width="2" height="1.1" fill="#d4d4d4"/><rect x="27" y="58.5" width="9" height="1.1" fill="#dedede"/><rect x="37" y="58.5" width="1" height="1.1" fill="#d4d4d4"/><rect x="39" y="58.5" width="8" height="1.1" fill="#ce9178"/><rect x="47" y="58.5" width="1" height="1.1" fill="#d4d4d4"/><rect x="49" y="58.5" width="5" height="1.1" fill="#9cdcfe"/><rect x="54" y="58.5" width="1" height="1.1" fill="#179fff"/><rect x="55" y="58.5" width="1" height="1.1" fill="#d4d4d4"/><rect x="4" y="60.5" width="1" height="1.1" fill="#da70d6"/><rect x="4" y="64.5" width="3" height="1.1" fill="#6a9955"/><rect x="5" y="66.5" width="1" height="1.1" fill="#6a9955"/><rect x="7" y="66.5" width="4" height="1.1" fill="#6a9955"/><rect x="12" y="66.5" width="3" height="1.1" fill="#6a9955"/><rect x="16" y="66.5" width="4" height="1.1" fill="#6a9955"/><rect x="21" y="66.5" width="3" height="1.1" fill="#6a9955"/><rect x="25" y="66.5" width="8" height="1.1" fill="#6a9955"/><rect x="34" y="66.5" width="1" height="1.1" fill="#6a9955"/><rect x="36" y="66.5" width="3" height="1.1" fill="#6a9955"/><rect x="40" y="66.5" width="9" height="1.1" fill="#6a9955"/><rect x="5" y="68.5" width="2" height="1.1" fill="#6a9955"/><rect x="4" y="70.5" width="6" height="1.1" fill="#569cd6"/><rect x="11" y="70.5" width="8" height="1.1" fill="#569cd6"/><rect x="20" y="70.5" width="6" height="1.1" fill="#dcdcaa"/><rect x="26" y="70.5" width="1" height="1.1" fill="#da70d6"/><rect x="27" y="70.5" width="1" height="1.1" fill="#da70d6"/><rect x="4" y="72.5" width="1" height="1.1" fill="#da70d6"/><rect x="8" y="74.5" width="2" height="1.1" fill="#6a9955"/><rect x="4" y="76.5" width="1" height="1.1" fill="#da70d6"/><rect x="4" y="80.5" width="3" height="1.1" fill="#6a9955"/><rect x="5" y="82.5" width="1" height="1.1" fill="#6a9955"/><rect x="7" y="82.5" width="5" height="1.1" fill="#6a9955"/><rect x="13" y="82.5" width="1" height="1.1" fill="#6a9955"/><rect x="15" y="82.5" width="5" height="1.1" fill="#6a9955"/><rect x="21" y="82.5" width="7" height="1.1" fill="#6a9955"/><rect x="29" y="82.5" width="8" height="1.1" fill="#6a9955"/><rect x="38" y="82.5" width="2" height="1.1" fill="#6a9955"/><rect x="41" y="82.5" width="8" height="1.1" fill="#6a9955"/><rect x="5" y="84.5" width="2" height="1.1" fill="#6a9955"/><rect x="4" y="86.5" width="6" height="1.1" fill="#569cd6"/><rect x="11" y="86.5" width="8" height="1.1" fill="#569cd6"/><rect x="20" y="86.5" width="5" height="1.1" fill="#dcdcaa"/><rect x="25" y="86.5" width="1" height="1.1" fill="#da70d6"/><rect x="26" y="86.5" width="7" height="1.1" fill="#4ec9b0"/><rect x="34" y="86.5" width="8" height="1.1" fill="#9cdcfe"/><rect x="42" y="86.5" width="1" height="1.1" fill="#da70d6"/><rect x="4" y="88.5" width="1" height="1.1" fill="#da70d6"/><rect x="8" y="90.5" width="2" height="1.1" fill="#6a9955"/><rect x="4" y="92.5" width="1" height="1.1" fill="#da70d6"/><rect x="4" y="96.5" width="3" height="1.1" fill="#6a9955"/><rect x="5" y="98.5" width="1" height="1.1" fill="#6a9955"/><rect x="7" y="98.5" width="7" height="1.1" fill="#6a9955"/><rect x="15" y="98.5" width="3" height="1.1" fill="#6a9955"/><rect x="19" y="98.5" width="9" height="1.1" fill="#6a9955"/><rect x="29" y="98.5" width="9" height="1.1" fill="#6a9955"/><rect x="5" y="100.5" width="2" height="1.1" fill="#6a9955"/><rect x="4" y="102.5" width="6" height="1.1" fill="#569cd6"/><rect x="11" y="102.5" width="8" height="1.1" fill="#569cd6"/><rect x="20" y="102.5" width="4" height="1.1" fill="#dcdcaa"/><rect x="24" y="102.5" width="1" height="1.1" fill="#da70d6"/><rect x="25" y="102.5" width="6" height="1.1" fill="#569cd6"/><rect x="32" y="102.5" width="3" height="1.1" fill="#9cdcfe"/><rect x="35" y="102.5" width="1" height="1.1" fill="#da70d6"/><rect x="4" y="104.5" width="1" height="1.1" fill="#da70d6"/><rect x="8" y="106.5" width="2" height="1.1" fill="#6a9955"/><rect x="4" y="108.5" width="1" height="1.1" fill="#da70d6"/><rect x="4" y="112.5" width="3" height="1.1" fill="#6a9955"/><rect x="5" y="114.5" width="1" height="1.1" fill="#6a9955"/><rect x="7" y="114.5" width="4" height="1.1" fill="#6a9955"/><rect x="12" y="114.5" width="3" height="1.1" fill="#6a9955"/><rect x="16" y="114.5" width="4" height="1.1" fill="#6a9955"/><rect x="21" y="114.5" width="3" height="1.1" fill="#6a9955"/><rect x="25" y="114.5" width="7" height="1.1" fill="#6a9955"/><rect x="33" y="114.5" width="3" height="1.1" fill="#6a9955"/><rect x="37" y="114.5" width="9" height="1.1" fill="#6a9955"/><rect x="47" y="114.5" width="9" height="1.1" fill="#6a9955"/><rect x="5" y="116.5" width="2" height="1.1" fill="#6a9955"/><rect x="4" y="118.5" width="6" height="1.1" fill="#569cd6"/><rect x="11" y="118.5" width="8" height="1.1" fill="#569cd6"/><rect x="20" y="118.5" width="4" height="1.1" fill="#dcdcaa"/><rect x="24" y="118.5" width="1" height="1.1" fill="#da70d6"/><rect x="25" y="118.5" width="6" height="1.1" fill="#569cd6"/><rect x="32" y="118.5" width="3" height="1.1" fill="#9cdcfe"/><rect x="35" y="118.5" width="1" height="1.1" fill="#da70d6"/><rect x="4" y="120.5" width="1" height="1.1" fill="#da70d6"/><rect x="8" y="122.5" width="2" height="1.1" fill="#6a9955"/><rect x="4" y="124.5" width="1" height="1.1" fill="#da70d6"/><rect x="4" y="128.5" width="3" height="1.1" fill="#6a9955"/><rect x="5" y="130.5" width="1" height="1.1" fill="#6a9955"/><rect x="7" y="130.5" width="6" height="1.1" fill="#6a9955"/><rect x="14" y="130.5" width="3" height="1.1" fill="#6a9955"/><rect x="18" y="130.5" width="9" height="1.1" fill="#6a9955"/><rect x="28" y="130.5" width="8" height="1.1" fill="#6a9955"/><rect x="37" y="130.5" width="2" height="1.1" fill="#6a9955"/><rect x="40" y="130.5" width="8" height="1.1" fill="#6a9955"/><rect x="5" y="132.5" width="2" height="1.1" fill="#6a9955"/><rect x="4" y="134.5" width="6" height="1.1" fill="#569cd6"/><rect x="11" y="134.5" width="8" height="1.1" fill="#569cd6"/><rect x="20" y="134.5" width="6" height="1.1" fill="#dcdcaa"/><rect x="26" y="134.5" width="1" height="1.1" fill="#da70d6"/><rect x="27" y="134.5" width="7" height="1.1" fill="#4ec9b0"/><rect x="35" y="134.5" width="8" height="1.1" fill="#9cdcfe"/><rect x="43" y="134.5" width="1" height="1.1" fill="#d4d4d4"/><rect x="45" y="134.5" width="6" height="1.1" fill="#569cd6"/><rect x="52" y="134.5" width="3" height="1.1" fill="#9cdcfe"/><rect x="55" y="134.5" width="1" height="1.1" fill="#da70d6"/><rect x="4" y="136.5" width="1" height="1.1" fill="#da70d6"/><rect x="8" y="138.5" width="2" height="1.1" fill="#6a9955"/><rect x="4" y="140.5" width="1" height="1.1" fill="#da70d6"/><rect x="4" y="144.5" width="3" height="1.1" fill="#6a9955"/><rect x="5" y="146.5" width="1" height="1.1" fill="#6a9955"/><rect x="7" y="146.5" width="6" height="1.1" fill="#6a9955"/><rect x="14" y="146.5" width="3" height="1.1" fill="#6a9955"/><rect x="18" y="146.5" width="9" height="1.1" fill="#6a9955"/><rect x="28" y="146.5" width="8" height="1.1" fill="#6a9955"/><rect x="37" y="146.5" width="4" height="1.1" fill="#6a9955"/><rect x="42" y="146.5" width="8" height="1.1" fill="#6a9955"/><rect x="5" y="148.5" width="2" height="1.1" fill="#6a9955"/><rect x="4" y="150.5" width="6" height="1.1" fill="#569cd6"/><rect x="11" y="150.5" width="8" height="1.1" fill="#569cd6"/><rect x="20" y="150.5" width="7" height="1.1" fill="#dcdcaa"/><rect x="27" y="150.5" width="1" height="1.1" fill="#da70d6"/><rect x="28" y="150.5" width="6" height="1.1" fill="#569cd6"/><rect x="35" y="150.5" width="3" height="1.1" fill="#9cdcfe"/><rect x="38" y="150.5" width="1" height="1.1" fill="#da70d6"/><rect x="4" y="152.5" width="1" height="1.1" fill="#da70d6"/><rect x="8" y="154.5" width="2" height="1.1" fill="#6a9955"/><rect x="4" y="156.5" width="1" height="1.1" fill="#da70d6"/><rect x="0" y="158.5" width="1" height="1.1" fill="#ffd700"/></g></svg>
  <div class="abs" style="left:1073px;top:57px;width:1px;height:652px;background:#151515"></div>
  <div class="abs" style="left:1073px;top:57px;width:14px;height:176px;background:#474747"></div>
  <div class="abs" style="left:1074px;top:79px;width:13px;height:2px;background:#a0a0a0"></div>
</div>

<div id="status">
<div class="abs" style="left:0;top:0;width:34px;height:21px;background:#0078d4"></div>
<svg class="abs" style="left:11px;top:3px" width="13" height="14" viewBox="0 0 13 14"><path d="M1.8 4.9 L5.9 8.7 L1.8 12.6 M11 0.8 L6.6 4.9 L11 8.7" fill="none" stroke="#ffffff" stroke-width="1.2"/></svg>
<svg class="abs" style="left:42px;top:3px" width="14" height="14" viewBox="0 0 14 14"><circle cx="7" cy="7" r="6" fill="none" stroke="#cccccc" stroke-width="1.1"/><path d="M4.5 4.5 L9.5 9.5 M9.5 4.5 L4.5 9.5" stroke="#cccccc" stroke-width="1.1"/></svg>
<div class="s" style="left:58px">0</div>
<svg class="abs" style="left:70px;top:3px" width="14" height="13" viewBox="0 0 14 13"><path d="M7 1 L13 12 H1 Z" fill="none" stroke="#cccccc" stroke-width="1.1"/><path d="M7 4.5 V8.5 M7 9.5 V11" stroke="#cccccc" stroke-width="1.1"/></svg>
<div class="s" style="left:86px">0</div>
<svg class="abs" style="left:111px;top:4px" width="10" height="13" viewBox="0 0 10 13"><path d="M5.5 0.8 L1 7 H5 L3.5 12.2 L9 5.5 H5 L6.5 0.8" fill="none" stroke="#cccccc" stroke-width="1"/></svg>
<div class="s" style="left:823.5px;transform:scaleX(0.951)">Ln 5, Col 1 (41 selected)</div>
<div class="s" style="left:965px;transform:scaleX(0.9)">Spaces: 4</div>
<div class="s" style="left:1029.5px;transform:scaleX(0.94)">UTF-8</div>
<div class="s" style="left:1077.5px;transform:scaleX(0.76)">LF</div>
<div class="s" style="left:1106px">{ }</div>
<div class="s" style="left:1125.5px;transform:scaleX(0.86)">PHP</div>
<svg class="abs" style="left:1162px;top:3px" width="16" height="14" viewBox="0 0 16 14"><g fill="none" stroke="#cccccc" stroke-width="1.7"><circle cx="5.5" cy="4.3" r="2.8"/><circle cx="10.5" cy="4.3" r="2.8"/></g><path d="M0.7 9.8 Q0.7 6.6 3 6.6 H13 Q15.3 6.6 15.3 9.8 Q15.3 13 8 13 Q0.7 13 0.7 9.8 Z" fill="#cccccc"/><rect x="3.4" y="7.6" width="9.2" height="3.4" fill="#181818"/><rect x="6" y="8.1" width="1.2" height="2.5" fill="#cccccc"/><rect x="8.8" y="8.1" width="1.2" height="2.5" fill="#cccccc"/></svg>
<svg class="abs" style="left:1193px;top:3px" width="14" height="15" viewBox="0 0 14 15"><g fill="none" stroke="#cccccc" stroke-width="1.3"><path d="M3.2 10.6 A5.2 5.2 0 1 1 10.2 10.6"/><path d="M4.9 8.4 A2.6 2.6 0 1 1 8.5 8.4"/></g><circle cx="6.7" cy="6.6" r="1.3" fill="#cccccc"/><path d="M6.7 7 V14" stroke="#cccccc" stroke-width="1.6"/></svg>
<div class="s" style="left:1210px;transform:scaleX(0.92)">Go Live</div>
<svg class="abs" style="left:1265px;top:4px" width="14" height="14" viewBox="0 0 14 14"><circle cx="7" cy="7" r="5.6" fill="none" stroke="#cccccc" stroke-width="1.1"/><path d="M3 11 L11 3" stroke="#cccccc" stroke-width="1.1"/></svg>
<div class="s" style="left:1282px">Prettier</div>
<svg class="abs" style="left:1337px;top:4px" width="14" height="14" viewBox="0 0 14 14"><g fill="none" stroke="#cccccc" stroke-width="1.1"><path d="M2 11 Q3 10 3 8 V6 Q3 1.5 7 1.5 Q11 1.5 11 6 V8 Q11 10 12 11 Z"/><path d="M5.5 12 Q7 13.8 8.5 12"/></g></svg>
</div>
<div id="bottomstrip"></div>
</body></html>
